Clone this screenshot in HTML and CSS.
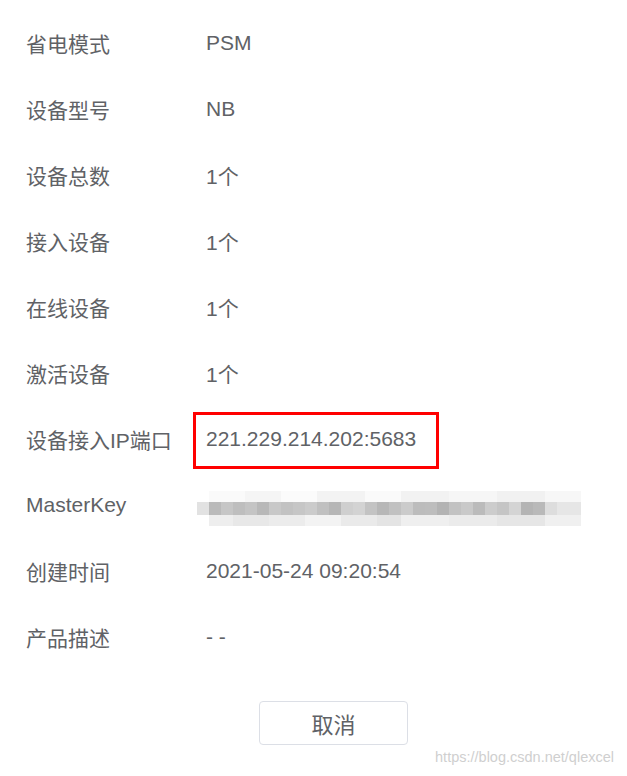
FILE: index.html
```html
<!DOCTYPE html>
<html lang="zh-CN">
<head>
  <meta charset="UTF-8">
  <title>产品详情</title>
  <link rel="stylesheet" href="styles.css">
</head>
<body>

<div class="detail">
  <div class="row"><span class="label">省电模式</span><span class="value">PSM</span></div>
  <div class="row"><span class="label">设备型号</span><span class="value">NB</span></div>
  <div class="row"><span class="label">设备总数</span><span class="value">1个</span></div>
  <div class="row"><span class="label">接入设备</span><span class="value">1个</span></div>
  <div class="row"><span class="label">在线设备</span><span class="value">1个</span></div>
  <div class="row"><span class="label">激活设备</span><span class="value">1个</span></div>
  <div class="row"><span class="label">设备接入IP端口</span><span class="value marked">221.229.214.202:5683</span></div>
  <div class="row">
    <span class="label">MasterKey</span>
    <span class="value">
      <span class="blur">
        <span class="band top"></span>
        <span class="band mid"></span>
        <span class="band bot"></span>
      </span>
    </span>
  </div>
  <div class="row"><span class="label">创建时间</span><span class="value">2021-05-24 09:20:54</span></div>
  <div class="row"><span class="label">产品描述</span><span class="value">- -</span></div>
</div>

<div class="footer">
  <button class="cancel">取消</button>
</div>

<div class="watermark">https://blog.csdn.net/qlexcel</div>

</body>
</html>
```

FILE: styles.css
```css
* {
  box-sizing: border-box;
}

body {
  margin: 0;
  background: #fff;
  color: #606266;
  font-family: "Liberation Sans", Arial, "Noto Sans CJK SC", sans-serif;
  width: 627px;
  height: 776px;
  position: relative;
  overflow: hidden;
}

.detail {
  padding: 10px 0 0 26px;
}

.row {
  display: flex;
  align-items: center;
  height: 66px;
  font-size: 21px;
}

.label {
  width: 180px;
  flex-shrink: 0;
}

.value {
  position: relative;
}

.value.marked::after {
  content: '';
  box-sizing: border-box;
  position: absolute;
  left: -13px;
  top: -15px;
  width: 246px;
  height: 57px;
  border: 3px solid #ff0000;
}

.blur {
  display: flex;
  flex-direction: column;
  width: 384px;
  margin-left: -9px;
  margin-top: 6px;
}

.band {
  display: block;
  height: 11px;
}

.band.top {
  margin-left: 12px;
  background: linear-gradient(to right,
    #fafafa 0 36px, #f5f5f5 36px 72px, #fbfbfb 72px 108px, #f3f3f3 108px 156px,
    #fafafa 156px 192px, #f2f2f2 192px 240px, #f6f6f6 240px 288px, #f1f1f1 288px 336px,
    #f7f7f7 336px 372px);
}

.band.mid {
  height: 13px;
  background: linear-gradient(to right,
    #e2e2e2 0 12px, #bababa 12px 24px, #c6c6c6 24px 36px, #bebebe 36px 48px,
    #c4c4c4 48px 60px, #b8b8b8 60px 72px, #c8c8c8 72px 84px, #c2c2c2 84px 96px,
    #c6c6c6 96px 108px, #cbcbcb 108px 120px, #c0c0c0 120px 132px, #b6b6b6 132px 144px,
    #cfcfcf 144px 156px, #d3d3d3 156px 168px, #c3c3c3 168px 180px, #b7b7b7 180px 192px,
    #c1c1c1 192px 204px, #cbcbcb 204px 216px, #bcbcbc 216px 228px, #bdbdbd 228px 240px,
    #b3b3b3 240px 252px, #c2c2c2 252px 264px, #c9c9c9 264px 276px, #bbbbbb 276px 288px,
    #cccccc 288px 300px, #c5c5c5 300px 312px, #d4d4d4 312px 324px, #b4b4b4 324px 336px,
    #b9b9b9 336px 348px, #dddddd 348px 360px, #e6e6e6 360px 372px);
}

.band.bot {
  margin-left: 12px;
  background: linear-gradient(to right,
    #eeeeee 0 24px, #e8e8e8 24px 60px, #ececec 60px 96px, #f3f3f3 96px 132px,
    #eaeaea 132px 168px, #e4e4e4 168px 192px, #efefef 192px 240px, #ebebeb 240px 288px,
    #e6e6e6 288px 336px, #f0f0f0 336px 372px);
}

.footer {
  padding: 31px 0 0 259px;
}

.cancel {
  width: 149px;
  height: 44px;
  background: #fff;
  border: 1px solid #dcdfe6;
  border-radius: 4px;
  color: #606266;
  font-family: "Noto Sans CJK SC", sans-serif;
  font-size: 22px;
  padding: 0;
}

.watermark {
  position: absolute;
  right: 13px;
  bottom: 11px;
  font-size: 14.5px;
  color: #cfcfcf;
}
```
